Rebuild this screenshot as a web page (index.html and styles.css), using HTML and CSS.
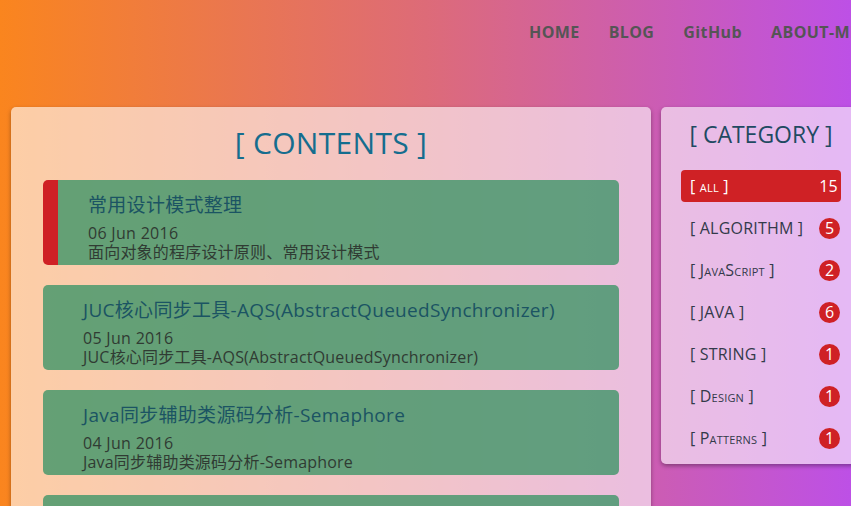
FILE: index.html
```html
<!DOCTYPE html>
<html>
<head>
<meta charset="utf-8">
<link rel="stylesheet" href="styles.css">
</head>
<body>
<div class="page">
  <header class="header">
    <nav class="nav">
      <a href="#">HOME</a>
      <a href="#">BLOG</a>
      <a href="#">GitHub</a>
      <a href="#">ABOUT-ME</a>
    </nav>
  </header>
  <div class="main">
    <section class="panel contents">
      <h1 class="contents-title">[ CONTENTS ]</h1>
      <div class="post active">
        <h2 class="post-title">常用设计模式整理</h2>
        <div class="post-date">06 Jun 2016</div>
        <div class="post-desc">面向对象的程序设计原则、常用设计模式</div>
      </div>
      <div class="post">
        <h2 class="post-title">JUC核心同步工具-AQS(AbstractQueuedSynchronizer)</h2>
        <div class="post-date">05 Jun 2016</div>
        <div class="post-desc">JUC核心同步工具-AQS(AbstractQueuedSynchronizer)</div>
      </div>
      <div class="post">
        <h2 class="post-title">Java同步辅助类源码分析-Semaphore</h2>
        <div class="post-date">04 Jun 2016</div>
        <div class="post-desc">Java同步辅助类源码分析-Semaphore</div>
      </div>
      <div class="post">
        <h2 class="post-title">Java同步辅助类源码分析-CountDownLatch</h2>
        <div class="post-date">03 Jun 2016</div>
        <div class="post-desc">Java同步辅助类源码分析-CountDownLatch</div>
      </div>
    </section>
    <aside class="panel category">
      <h3 class="category-title">[ CATEGORY ]</h3>
      <ul class="cat-list">
        <li class="cat active"><span class="cat-name sc">[ all ]</span><span class="badge plain">15</span></li>
        <li class="cat"><span class="cat-name">[ ALGORITHM ]</span><span class="badge">5</span></li>
        <li class="cat"><span class="cat-name sc">[ JavaScript ]</span><span class="badge">2</span></li>
        <li class="cat"><span class="cat-name">[ JAVA ]</span><span class="badge">6</span></li>
        <li class="cat"><span class="cat-name">[ STRING ]</span><span class="badge">1</span></li>
        <li class="cat"><span class="cat-name sc">[ Design ]</span><span class="badge">1</span></li>
        <li class="cat"><span class="cat-name sc">[ Patterns ]</span><span class="badge">1</span></li>
      </ul>
    </aside>
  </div>
</div>
</body>
</html>
```

FILE: styles.css
```css
* { box-sizing: border-box; }
html, body {
  margin: 0;
  padding: 0;
  height: 100%;
  overflow: hidden;
}
body {
  background: linear-gradient(to right, #fa851e, #dd6b78 50%, #bd50e6);
  font-family: "Open Sans", "Noto Sans", "Noto Sans CJK SC", sans-serif;
}
.page {
  width: 880px;
}
.header {
  height: 107px;
  padding-top: 20px;
}
.nav {
  display: flex;
  gap: 29px;
  margin-left: 529px;
}
.nav a {
  color: #555;
  font-weight: 700;
  font-size: 16px;
  line-height: 24px;
  letter-spacing: 0.4px;
  text-decoration: none;
  white-space: nowrap;
}
.main {
  display: flex;
  align-items: flex-start;
  gap: 10px;
  padding-left: 11px;
}
.panel {
  background: rgba(255, 255, 255, 0.6);
  border-radius: 5px;
  box-shadow: 0 2px 4px rgba(0, 0, 0, 0.35);
}
.contents {
  width: 640px;
  padding: 16px 32px 20px;
}
.contents-title {
  margin: 0 0 17px;
  text-align: center;
  font-weight: 400;
  font-size: 30px;
  line-height: 40px;
  letter-spacing: 0.3px;
  color: #156d8e;
}
.post {
  background: rgba(62, 149, 104, 0.8);
  border-radius: 5px;
  height: 85px;
  padding: 12px 10px 0 40px;
  margin-bottom: 20px;
  overflow: hidden;
}
.post.active {
  border-left: 15px solid #cf2125;
  padding-left: 30px;
}
.post-title {
  margin: 0 0 6px;
  font-weight: 400;
  font-size: 19px;
  line-height: 26px;
  letter-spacing: 0.3px;
  color: #1b5463;
  white-space: nowrap;
}
.post-date {
  font-size: 16px;
  line-height: 19px;
  letter-spacing: 0.3px;
  color: #303b33;
}
.post-desc {
  font-size: 16px;
  line-height: 19px;
  letter-spacing: 0.2px;
  color: #303b33;
  white-space: nowrap;
}
.category {
  width: 200px;
  padding: 10px 20px 10px;
}
.category-title {
  margin: 0 0 19px;
  text-align: center;
  font-weight: 400;
  font-size: 23px;
  line-height: 34px;
  color: #1f4a62;
}
.cat-list {
  list-style: none;
  margin: 0;
  padding: 0;
  display: flex;
  flex-direction: column;
  gap: 10px;
}
.cat {
  height: 32px;
  display: flex;
  align-items: center;
  justify-content: space-between;
  padding: 0 1px 0 9px;
  border-radius: 4px;
  font-size: 16px;
  letter-spacing: 0.2px;
  color: #333a4a;
}
.cat-name.sc {
  font-variant: small-caps;
}
.cat.active {
  background: #cf2125;
  color: #fff;
}
.badge {
  min-width: 21px;
  height: 21px;
  border-radius: 50%;
  background: #cf2125;
  color: #fff;
  font-size: 16px;
  line-height: 21px;
  text-align: center;
  letter-spacing: 0;
}
.badge.plain {
  border-radius: 0;
  background: none;
  padding-right: 2px;
}
```
